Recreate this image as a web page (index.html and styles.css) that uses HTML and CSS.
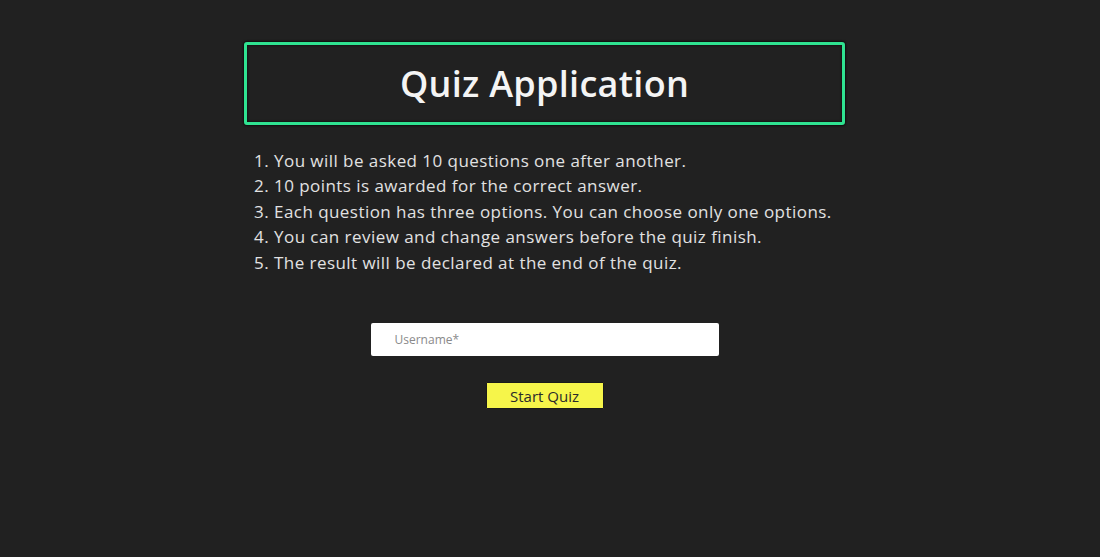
FILE: index.html
```html
<!DOCTYPE html>
<html lang="en">
<head>
<meta charset="utf-8">
<title>Quiz Application</title>
<link rel="stylesheet" href="styles.css">
</head>
<body>
<main class="page">
  <header class="title-box">
    <h1 class="title">Quiz Application</h1>
  </header>
  <ol class="rules">
    <li>You will be asked 10 questions one after another.</li>
    <li>10 points is awarded for the correct answer.</li>
    <li>Each question has three options. You can choose only one options.</li>
    <li>You can review and change answers before the quiz finish.</li>
    <li>The result will be declared at the end of the quiz.</li>
  </ol>
  <form class="start-form">
    <input class="username" type="text" placeholder="Username*">
    <button class="start-btn" type="button">Start Quiz</button>
  </form>
</main>
</body>
</html>
```

FILE: styles.css
```css
html, body {
  margin: 0;
  padding: 0;
  background: #212121;
  height: 100%;
}

body {
  font-family: "Open Sans", "Liberation Sans", sans-serif;
  color: #e4e4e4;
}

.page {
  width: 601px;
  margin: 0 auto;
  padding: 42px 11px 0 0;
  display: flex;
  flex-direction: column;
  align-items: center;
}

.title-box {
  box-sizing: border-box;
  width: 601px;
  height: 83px;
  border: 3px solid #2fe391;
  border-radius: 3px;
  box-shadow: 0 0 2px 1px rgba(0, 0, 0, 0.6), inset 0 0 2px 1px rgba(0,0,0,0.4);
  display: flex;
  align-items: center;
  justify-content: center;
}

.title {
  margin: 0;
  font-size: 36px;
  font-weight: 600;
  color: #f4f4f4;
  letter-spacing: 0.3px;
}

.rules {
  align-self: flex-start;
  margin: 23px 0 0 0;
  padding-left: 30px;
  font-size: 17px;
  letter-spacing: 0.45px;
  line-height: 25.4px;
  color: #e2e2e2;
}

.start-form {
  margin-top: 48px;
  display: flex;
  flex-direction: column;
  align-items: center;
  gap: 26px;
}

.username {
  box-sizing: border-box;
  width: 348px;
  height: 33px;
  border: none;
  border-radius: 2px;
  background: #ffffff;
  padding: 0 0 0 24px;
  font-family: inherit;
  font-size: 12px;
  outline: none;
}

.username::placeholder {
  color: #8a8a8a;
}

.start-btn {
  box-sizing: border-box;
  width: 118px;
  height: 27px;
  border: 1px solid #1a1a1a;
  border-radius: 1px;
  background: #f6f54a;
  color: #2a2a2a;
  font-family: inherit;
  font-size: 15px;
  cursor: pointer;
}
```
